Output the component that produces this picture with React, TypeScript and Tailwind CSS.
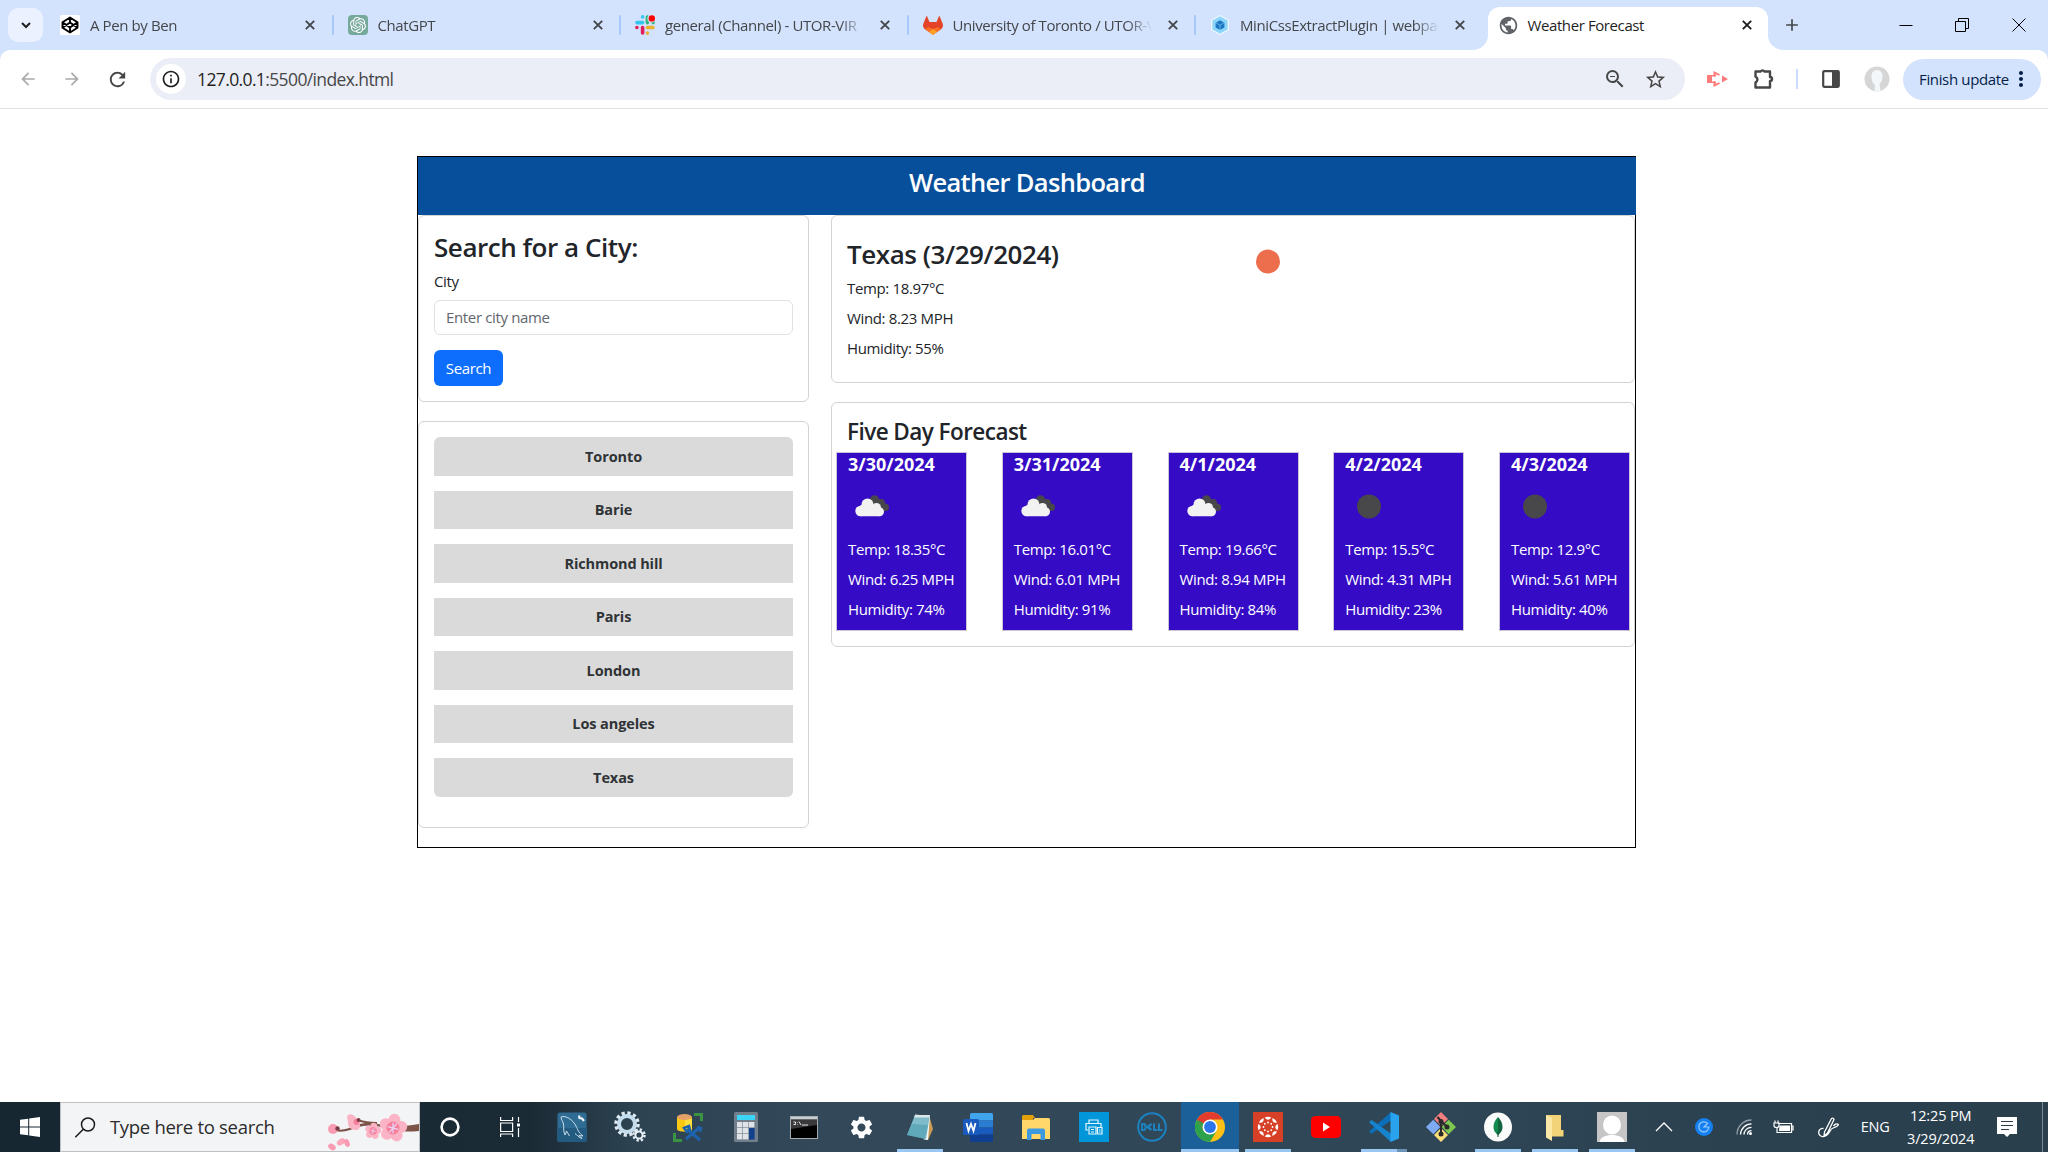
import React from "react";
import {
  MdArrowBack, MdArrowForward, MdRefresh, MdInfoOutline, MdZoomOut, MdStarOutline,
  MdPublic, MdAdd, MdMoreVert, MdSettings,
} from "react-icons/md";
import { SiOpenai } from "react-icons/si";

/* ---------- favicons ---------- */

const CodepenFavicon = () => (
  <svg width="20" height="20" viewBox="0 0 20 20">
    <rect width="20" height="20" rx="1.500" fill="#fff" />
    <path
      d="m10 2.500 7.500 4.700v5.600L10 17.500l-7.500-4.700V7.200zM10 2.500v5M10 12.500v5M2.500 7.200 10 12.500l7.500-5.300M2.500 12.800 10 7.500l7.500 5.300"
      fill="none" stroke="#000" strokeWidth="1.900" strokeLinejoin="round"
    />
  </svg>
);

const ChatGptFavicon = () => (
  <span className="flex h-5 w-5 items-center justify-center rounded-[4px] bg-[#75a99b] text-white">
    <SiOpenai size={16} />
  </span>
);

const SlackFavicon = () => (
  <svg width="20" height="20" viewBox="0 0 20 20">
    <g strokeWidth="3.6" strokeLinecap="round">
      <path d="M7.6 1.9h.01M2 7.6h5.6" stroke="#36c5f0" />
      <path d="M12.4 2v5.6M18.1 7.6h.01" stroke="#2eb67d" />
      <path d="M12.4 12.5H18M12.4 18.1h.01" stroke="#ecb22e" />
      <path d="M7.6 12.5V18M1.9 12.5h.01" stroke="#e01e5a" />
    </g>
    <circle cx="16.4" cy="3.6" r="4" fill="#d3e2fd" />
    <circle cx="16.8" cy="3.4" r="3.2" fill="#ff0000" />
  </svg>
);

const GitlabFavicon = () => (
  <svg width="20" height="20" viewBox="0 0 20 20">
    <path d="M3.7.6 6.5 7h7L16.3.6l3.400 8.200c.7 2.300 0 4.200-1.800 5.500L10 19.800l-7.900-5.500C.3 13-.4 11.100.3 8.800z" fill="#e24329" />
    <path d="M10 19.800 2.100 14.300l2.900-2.300L10 14z" fill="#fc6d26" />
    <path d="m10 19.800 7.900-5.500-2.900-2.300L10 14z" fill="#fc6d26" />
    <path d="m6 17 4-3 4 3-4 2.800z" fill="#fca326" />
  </svg>
);

const WebpackFavicon = () => (
  <svg width="20" height="20" viewBox="0 0 20 20">
    <path d="m10 0 9 5v10l-9 5-9-5V5z" fill="#f3f8fc" />
    <path d="m10 1.300 7.700 4.300v8.800L10 18.700l-7.700-4.300V5.600z" fill="#8ed6fb" />
    <path d="m10 5.200 4.400 2.500v4.800L10 15l-4.400-2.500V7.700z" fill="#1c78c0" />
    <path d="m5.600 7.700 4.400 2.500 4.400-2.500M10 10.200V15" stroke="#8ed6fb" strokeWidth=".6" fill="none" />
  </svg>
);

/* ---------- browser chrome ---------- */

const CloseIcon = () => (
  <svg width="10" height="10" viewBox="0 0 10 10" fill="none" stroke="currentColor" strokeWidth="1.900">
    <path d="m.8.8 8.400 8.400m0-8.400L.8 9.200" />
  </svg>
);

const tabs = [
  { title: "A Pen by Ben", icon: <CodepenFavicon /> },
  { title: "ChatGPT", icon: <ChatGptFavicon /> },
  { title: "general (Channel) - UTOR-VIR", icon: <SlackFavicon /> },
  { title: "University of Toronto / UTOR-V", icon: <GitlabFavicon /> },
  { title: "MiniCssExtractPlugin | webpac", icon: <WebpackFavicon /> },
];

function TabStrip() {
  return (
    <div className="flex h-[50px] bg-[#d3e2fd] text-[15px] tracking-[-0.400px] text-[#44474a]">
      <div className="flex w-[48px] shrink-0 items-center pl-[8px]">
        <div className="flex h-[34px] w-[35px] items-center justify-center rounded-[10px] bg-[#ebf1fe] text-[#1f1f1f]">
          <svg width="10" height="7" viewBox="0 0 10 7" fill="none" stroke="currentColor" strokeWidth="2">
            <path d="m1 1 4 4 4-4" />
          </svg>
        </div>
      </div>
      {tabs.map((tab, i) => (
        <div key={tab.title} className="flex w-[287.5px] shrink-0 items-center pl-[12px]">
          <div className="w-5 shrink-0">{tab.icon}</div>
          <div className="ml-[10px] w-[200px] whitespace-nowrap leading-[22px] [mask-image:linear-gradient(to_right,black_175px,transparent_199px)]">
            {tab.title}
          </div>
          <div className="ml-[11px] flex w-[18px] justify-center">
            <CloseIcon />
          </div>
          {i < 4 && <div className="mr-[2px] ml-auto h-5 w-[2px] rounded bg-[#a8c7fa]" />}
        </div>
      ))}
      <div className="ml-[-13px] flex h-full w-[310px] shrink-0 items-end">
        <div className="h-[15px] w-[15px] bg-white">
          <div className="h-full w-full rounded-br-[15px] bg-[#d3e2fd]" />
        </div>
        <div className="flex h-[43px] w-[280px] items-center rounded-t-[12px] bg-white pb-[7px] pl-[10px] text-[#1f1f1f]">
          <MdPublic size={21} className="text-[#5f6368]" />
          <span className="ml-[9px] leading-[22px]">Weather Forecast</span>
          <span className="mr-[16px] ml-auto"><CloseIcon /></span>
        </div>
        <div className="h-[15px] w-[15px] bg-white">
          <div className="h-full w-full rounded-bl-[15px] bg-[#d3e2fd]" />
        </div>
      </div>
      <div className="flex w-[18px] items-center">
        <MdAdd size={20} className="ml-[-1px] shrink-0" />
      </div>
      <div className="mr-[22px] ml-auto flex items-center gap-[43px] text-black">
        <svg width="14" height="14" viewBox="0 0 14 14"><path d="M.5 7.500h13" stroke="currentColor" /></svg>
        <svg width="14" height="14" viewBox="0 0 14 14" fill="none" stroke="currentColor" className="ml-[-1px]">
          <path d="M.5 3.500h10v10H.5zM3.500 3.500v-3h10v10h-3" />
        </svg>
        <svg width="14" height="14" viewBox="0 0 14 14" stroke="currentColor"><path d="m.5.5 13 13m0-13-13 13" /></svg>
      </div>
    </div>
  );
}

function Toolbar() {
  return (
    <div className="bg-[#d3e2fd]">
      <div className="flex h-[59px] items-center rounded-t-[10px] border-b border-[#dfe1e5] bg-white text-[#474747]">
        <div className="flex w-[150px] items-center pl-[18px]">
          <MdArrowBack size={20} className="text-[#ababab]" />
          <MdArrowForward size={20} className="ml-[24px] text-[#ababab]" />
          <MdRefresh size={23} className="ml-[24px]" />
        </div>
        <div className="flex h-[42px] w-[1535px] items-center rounded-full bg-[#ebeef7] pl-[6px]">
          <div className="flex h-[30px] w-[30px] items-center justify-center rounded-full bg-white text-[#1f1f1f]">
            <MdInfoOutline size={20} />
          </div>
          <span className="ml-[11px] text-[17.500px] leading-[26px] tracking-[-0.620px]">
            <span className="text-[#1f1f1f]">127.0.0.1</span>:5500/index.html
          </span>
          <MdZoomOut size={24} className="mr-[17px] ml-auto" />
          <MdStarOutline size={23} className="mr-[18px]" />
        </div>
        <svg width="22" height="18" viewBox="0 0 22 18" className="ml-[22px]">
          <path d="M0 5h5v8H0z" fill="#ff7b7b" />
          <path d="M6.500 6.500V1L13 4.200l-1 1.600-3.500-1.500v2.200zM6.500 11.500V17L13 13.800l-1-1.600-3.500 1.500v-2.200zM15 5.500 21 9l-6 3.500z" fill="#ff7b7b" />
          <path d="M5 5.800h4M5 12.200h4" stroke="#ff7b7b" strokeWidth="1.400" />
        </svg>
        <svg width="24" height="24" viewBox="0 0 24 24" className="ml-[23px]">
          <path
            d="M3.500 4.500h5.200a2 2 0 0 1 3.600 0h5.700v5.500a2 2 0 0 1 0 4v6.500H3.500v-5.200a3 3 0 0 0 0-5.600z"
            fill="none" stroke="#474747" strokeWidth="2.400" strokeLinejoin="round"
          />
        </svg>
        <div className="ml-[20px] h-5 w-[2px] bg-[#c9dcfb]" />
        <svg width="20" height="20" viewBox="0 0 20 20" className="ml-[23px]">
          <rect x="2.200" y="2.200" width="15.600" height="15.600" rx="1" fill="none" stroke="#474747" strokeWidth="2.200" />
          <path d="M11 2h7v16h-7z" fill="#474747" />
        </svg>
        <svg width="26" height="26" viewBox="0 0 26 26" className="ml-[23px]">
          <circle cx="13" cy="13" r="12.500" fill="#d6d6d6" />
          <path d="M13 4c4 0 5.500 3 5.500 6.500s-1.500 6-3 7.500l1 7h-6l.5-6C8.500 17.500 7.500 14 7.500 10.500S9 4 13 4z" fill="#f4f7f9" />
        </svg>
        <div className="ml-[13px] flex h-[41px] w-[138px] items-center rounded-full bg-[#d3e2fd] pl-[16px] text-[#041e49]">
          <span className="text-[15px] leading-[22px] tracking-[-0.350px] whitespace-nowrap">Finish update</span>
          <MdMoreVert size={24} className="mr-[8px] ml-auto" />
        </div>
      </div>
    </div>
  );
}

/* ---------- dashboard ---------- */

const cities = ["Toronto", "Barie", "Richmond hill", "Paris", "London", "Los angeles", "Texas"];

const forecast = [
  { date: "3/30/2024", clouds: true, temp: "18.35", wind: "6.25", humidity: 74 },
  { date: "3/31/2024", clouds: true, temp: "16.01", wind: "6.01", humidity: 91 },
  { date: "4/1/2024", clouds: true, temp: "19.66", wind: "8.94", humidity: 84 },
  { date: "4/2/2024", clouds: false, temp: "15.5", wind: "4.31", humidity: 23 },
  { date: "4/3/2024", clouds: false, temp: "12.9", wind: "5.61", humidity: 40 },
];

const BrokenClouds = () => (
  <svg width="47" height="47" viewBox="0 0 47 47">
    <g fill="#48484a">
      <circle cx="26.500" cy="17" r="4.700" />
      <circle cx="33" cy="20" r="4" />
      <circle cx="37.200" cy="24.200" r="3.700" />
      <path d="M25 17h10l3 11h-6z" />
    </g>
    <g fill="#f2f2f2">
      <circle cx="19.500" cy="21.500" r="6" />
      <circle cx="12.500" cy="28" r="5.200" />
      <circle cx="28.500" cy="24.500" r="4.500" />
      <circle cx="31.500" cy="28.800" r="4.500" />
      <path d="M12.500 22h15l4 11.300h-19z" />
    </g>
  </svg>
);

const Disc = ({ className }: { className: string }) => (
  <svg width="47" height="47" viewBox="0 0 47 47" className={className}>
    <circle cx="24" cy="23.500" r="12" fill="currentColor" />
  </svg>
);

function Dashboard() {
  return (
    <main className="mt-[47px] ml-[417px] h-[692px] w-[1219px] border border-black text-[15px] leading-[22.5px] tracking-[-0.350px] text-[#212529]">
      <header className="mr-[-1px] h-[58px] bg-[#084f9b] pt-[9px] text-center text-[25.500px] leading-[32px] font-semibold tracking-[-0.680px] text-white">
        Weather Dashboard
      </header>
      <div className="flex">
        <div className="w-[391px]">
          <section className="h-[187px] rounded-[6px] border border-[#d2d3d4] p-[15px]">
            <h3 className="mb-[6.500px] pt-px text-[26px] leading-[31.500px] font-[560] tracking-[-0.450px]">Search for a City:</h3>
            <label className="mb-[7.500px] block">City</label>
            <div className="mb-[15px] h-[35px] rounded-[6px] border border-[#dee2e6] px-[11px] py-[5px] text-[#5f666d]">
              Enter city name
            </div>
            <button className="flex h-[36px] w-[69px] items-center justify-center rounded-[6px] bg-[#0d6efd] text-white">
              Search
            </button>
          </section>
          <section className="mt-[19px] h-[407px] rounded-[6px] border border-[#d2d3d4] p-[15px]">
            <ul className="flex flex-col gap-[15px]">
              {cities.map((city) => (
                <li
                  key={city}
                  className="flex h-[38.500px] items-center justify-center bg-[#dadada] pt-px text-[14.500px] font-bold tracking-[-0.100px] text-[#2f3336] first:rounded-t-[6px] last:rounded-b-[6px]"
                >
                  {city}
                </li>
              ))}
            </ul>
          </section>
        </div>
        <div className="ml-[22px] w-[804px]">
          <section className="h-[167.500px] rounded-[6px] border border-[#d2d3d4] px-[15px] pt-[21.500px]">
            <div className="mb-[7.500px] flex h-[31.500px]">
              <h3 className="w-[396.500px] pt-px text-[26px] leading-[31.500px] font-[560] tracking-[-0.450px]">Texas (3/29/2024)</h3>
              <Disc className="text-[#ec6e4c]" />
            </div>
            <p className="mb-[7.500px]">Temp: 18.97°C</p>
            <p className="mb-[7.500px]">Wind: 8.23 MPH</p>
            <p>Humidity: 55%</p>
          </section>
          <section className="mt-[19.500px] h-[245px] rounded-[6px] border border-[#d2d3d4] px-[4px] pt-[15px]">
            <h4 className="mb-[7px] ml-[11px] text-[22.500px] leading-[27px] font-[560] tracking-[-0.550px]">Five Day Forecast</h4>
            <div className="flex justify-between">
              {forecast.map((day) => (
                <article key={day.date} className="h-[179px] w-[131px] border border-[#c9c4d6] bg-[#350bc5] pl-[11px] whitespace-nowrap text-white">
                  <h5 className="text-[18px] leading-[23px] font-bold tracking-normal">{day.date}</h5>
                  <div className="mt-[7px] mb-[8px]">
                    {day.clouds ? <BrokenClouds /> : <Disc className="text-[#48484a]" />}
                  </div>
                  <p className="mb-[7.500px]">Temp: {day.temp}°C</p>
                  <p className="mb-[7.500px]">Wind: {day.wind} MPH</p>
                  <p>Humidity: {day.humidity}%</p>
                </article>
              ))}
            </div>
          </section>
        </div>
      </div>
    </main>
  );
}

/* ---------- taskbar ---------- */

const petals = [0, 72, 144, 216, 288];

function Flower({ x, y, r }: { x: number; y: number; r: number }) {
  return (
    <g transform={`translate(${x} ${y}) scale(${r / 10})`}>
      {petals.map((a) => (
        <ellipse key={a} cx="0" cy="-6.200" rx="4.600" ry="4.800" fill="#fbb3c6" transform={`rotate(${a + 10})`} />
      ))}
      <circle r="5" fill="#f77f9b" />
      <path d="M0-4V4M-4-1 4 1M-3 3.500 3-3.500" stroke="#e6d3f4" strokeWidth="1" />
    </g>
  );
}

const Blossoms = () => (
  <svg width="92" height="48" viewBox="0 0 92 48">
    <path d="M8 26c8 2 14-1 22-4 10-4 20-1 32 1 8 1 18 0 30-2v7c-10 1-20 1-30-2-12-4-22-4-31-2-8 3-14 6-23 4z" fill="#7c5347" />
    <path d="M30 17c6 2 12 3 20 3" stroke="#7c5347" strokeWidth="2" fill="none" />
    <circle cx="6" cy="26" r="5" fill="#f99bb2" />
    <circle cx="10.500" cy="25.500" r="2.200" fill="#7a3b46" />
    <path d="M21 12c4-2 7 1 10 5s3 10-2 10-8-3-8-7-2-6 0-8z" fill="#fbb3c6" />
    <circle cx="29.500" cy="19" r="3" fill="#f77f9b" />
    <circle cx="31.500" cy="17" r="2" fill="#7a3b46" />
    <Flower x={46} y={28} r={7.5} />
    <Flower x={66} y={25} r={13} />
    <ellipse cx="5" cy="44" rx="4" ry="3" fill="#f99bb2" transform="rotate(30 5 44)" />
    <ellipse cx="14" cy="39" rx="4.500" ry="3" fill="#fba6bb" transform="rotate(-30 14 39)" />
    <ellipse cx="20" cy="40" rx="2.600" ry="4" fill="#f99bb2" transform="rotate(-20 20 40)" />
  </svg>
);

const MySql = () => (
  <svg width="30" height="30" viewBox="0 0 30 30">
    <rect x=".5" y=".5" width="29" height="29" rx="2.500" fill="#2e6c94" />
    <path d="M0 16h30v11.500a2.500 2.500 0 0 1-2.500 2.500h-25A2.500 2.500 0 0 1 0 27.500z" fill="#235a7f" />
    <path d="M4 5c5-2 12 3 15 9 2 4 2 6 7 10l-4-.5 3 3c-4-1-5-4-7-5M4 5c0 3 2 4 2.500 7S6 19 8 23c1-1 1-3 1.500-4l3 5" fill="none" stroke="#c9dde9" strokeWidth="1" />
    <path d="m22 3.500.5 2.500 2.500.5 2 2.500" stroke="#eef5fa" strokeWidth="2.200" fill="none" />
  </svg>
);

const Gears = () => (
  <svg width="32" height="32" viewBox="0 0 32 32">
    <circle cx="13" cy="13" r="11" fill="none" stroke="#dfeaf2" strokeWidth="3.500" strokeDasharray="3.200 2.560" />
    <circle cx="13" cy="13" r="8" fill="none" stroke="#c4dcec" strokeWidth="4" />
    <circle cx="25" cy="24" r="5.500" fill="none" stroke="#dfeaf2" strokeWidth="2.500" strokeDasharray="2.300 2.020" />
    <circle cx="25" cy="24" r="3.600" fill="none" stroke="#e8f0f6" strokeWidth="2" />
  </svg>
);

const Database = () => (
  <svg width="30" height="30" viewBox="0 0 30 30">
    <path d="M21 2.500h7.500V9M1.500 21v7.500H9" fill="none" stroke="#3a9342" strokeWidth="3" />
    <path d="M4 5h15v12c0 3.500-15 3.500-15 0z" fill="#fdc912" />
    <path d="M12 7h7v10c0 2-3 2.500-7 2.500z" fill="#ffdf3a" />
    <ellipse cx="11.500" cy="5" rx="7.500" ry="3" fill="#e3a069" />
    <path d="M13 27 26 16M14 17l13 11" stroke="#1e63ad" strokeWidth="3" />
    <path d="m11 16 5-2 1 4-3 2zM24 15l4 1-1 4" fill="none" stroke="#1e63ad" strokeWidth="2.500" />
  </svg>
);

const Calculator = () => (
  <svg width="24" height="30" viewBox="0 0 24 30">
    <rect width="24" height="30" rx="1.500" fill="#717e8b" />
    <rect x="3" y="3" width="18" height="5" fill="#3bd5f8" />
    {[10, 16, 22].map((y) => [3, 9, 15].map((x) => (
      <rect key={`${x}-${y}`} x={x} y={y} width="5.400" height="5.400" fill={x === 15 && y > 10 ? "#14418b" : "#dfe3e7"} />
    )))}
    <path d="M15 16h5.400v11.400H15z" fill="#14418b" />
  </svg>
);

const Terminal = () => (
  <svg width="28" height="23" viewBox="0 0 28 23">
    <rect x=".5" y=".5" width="27" height="22" fill="#000" stroke="#a5adb2" />
    <path d="M1 1h26v2.500H1z" fill="#c9ced1" />
    <path d="M1 13V4h26v5z" fill="#39393b" />
    <path d="M3.500 6h2v2.500h-2M7.500 6v.5M7.500 8v.5M9 5.500l2 3.500M12 9h6" stroke="#e5e5e5" fill="none" />
  </svg>
);

const Notepad = () => (
  <svg width="28" height="30" viewBox="0 0 28 30">
    <path d="M23 3l4 14-5 11-3-1z" fill="#c99b57" />
    <path d="M9 2.500 24 4l-2 24-4-.5z" fill="#f5f7f7" />
    <path d="M9 3h15l-4 24L1 23z" fill="#7fbccb" />
    <path d="M6 12 22 13l-3 14L1 23z" fill="#4a9caf" opacity=".6" />
    <path d="M9 3h15l-.5 2.500H8z" fill="#dce5e7" />
  </svg>
);

const Word = () => (
  <svg width="30" height="29" viewBox="0 0 30 29">
    <path d="M7 1.500A1.500 1.500 0 0 1 8.500 0H28.500A1.500 1.500 0 0 1 30 1.500V7.500H7z" fill="#41a5ee" />
    <path d="M7 7.500h23v7H7z" fill="#2b7cd3" />
    <path d="M7 14.500h23v7H7z" fill="#185abd" />
    <path d="M7 21.500h23v6a1.500 1.500 0 0 1-1.500 1.500h-20A1.500 1.500 0 0 1 7 27.500z" fill="#103f91" />
    <rect y="6" width="16" height="16" rx="1.500" fill="#185abd" />
    <path d="m3.500 10 2 8L8 11l2.500 7 2-8" fill="none" stroke="#fff" strokeWidth="1.800" />
  </svg>
);

const Explorer = () => (
  <svg width="28" height="25" viewBox="0 0 28 25">
    <path d="M0 1.500A1.500 1.500 0 0 1 1.500 0H11l2 3h-2v5H0z" fill="#e3a008" />
    <path d="M0 5h11l2-2h13.500A1.500 1.500 0 0 1 28 4.500V24H0z" fill="#ffd76a" />
    <path d="M5 25V15.500A2 2 0 0 1 7 13.500h14a2 2 0 0 1 2 2V25h-4.500v-6h-9v6z" fill="#3e9ae0" />
  </svg>
);

const Printer = () => (
  <svg width="30" height="30" viewBox="0 0 30 30">
    <path d="M0 0h30v30H0z" fill="#0096d9" />
    <g fill="none" stroke="#e5f5fc" strokeWidth="1.200">
      <path d="M10 11V8h9v3M9 18H7v-6.500h15V15M10 15h7v7h-7zM12 17.500h3M12 20h3" />
      <path d="M18.500 15.500H23V22h-4.500zM20 18h1.500M20 20h1.500" />
    </g>
  </svg>
);

const Dell = () => (
  <svg width="30" height="30" viewBox="0 0 30 30">
    <circle cx="15" cy="15" r="13.800" fill="none" stroke="#1b82bf" strokeWidth="2" />
    <path d="M5 12h2.500q2.500 3 0 6H5zM13.500 12.500 10 15l3.500 2.500M14.500 11.800l-3 3.200 3 3M17 11.500V18h3.500M22 11.500V18h3.500" fill="none" stroke="#1b82bf" strokeWidth="2" />
  </svg>
);

const Chrome = () => (
  <svg width="30" height="30" viewBox="0 0 30 30">
    <circle cx="15" cy="15" r="15" fill="#fbc116" />
    <path d="M15 15 21.500 18.750 15 30A15 15 0 0 1 2 7.500l6.500 11.250z" fill="#2da24c" />
    <path d="M2 7.500A15 15 0 0 1 28 7.500H15L8.500 18.750z" fill="#e33b2e" />
    <path d="M2 7.500 8.500 18.750 15 15z" fill="#2da24c" />
    <circle cx="15" cy="15" r="7.500" fill="#fff" />
    <circle cx="15" cy="15" r="5.900" fill="#2a75ea" />
  </svg>
);

const Canvas = () => (
  <svg width="30" height="30" viewBox="0 0 30 30">
    <path d="M0 0h30v30H0z" fill="#d64027" />
    {[0, 45, 90, 135, 180, 225, 270, 315].map((a) => (
      <g key={a} transform={`rotate(${a} 15 15)`} fill="#fff">
        <path d="M11.700 5.500Q15 4 18.300 5.500 15 10 11.700 5.500z" />
        <circle cx="15" cy="10.500" r=".9" />
      </g>
    ))}
  </svg>
);

const YouTube = () => (
  <svg width="30" height="22" viewBox="0 0 30 22">
    <rect width="30" height="22" rx="4.500" fill="#f00" />
    <path d="m12 6.500 7 4.500-7 4.500z" fill="#fff" />
  </svg>
);

const VsCode = () => (
  <svg width="30" height="30" viewBox="0 0 30 30">
    <path d="M22 0 0 19.500l2.500 2.300L22 8.500z" fill="#0a6fb8" />
    <path d="M2.500 8 0 10.300 22 30V21.500z" fill="#1583ce" />
    <path d="M21.500 0 30 3.500v23L21.500 30z" fill="#29a3ee" />
  </svg>
);

const Git = () => (
  <svg width="30" height="30" viewBox="0 0 30 30">
    <path d="m15 0 7 7-7 7-7-7z" fill="#f37f7f" />
    <path d="m7.300 7.700 7 7.300-7 7.300L0 15z" fill="#7fabf5" />
    <path d="m22.700 7.700 7.300 7.300-7.300 7.300-7-7.300z" fill="#7ec850" />
    <path d="m15 16 7 7-7 7-7-7z" fill="#fbdf79" />
    <path d="M11.500 5 15 9v13M15 9l6 6" stroke="#2b2b2b" strokeWidth="2" fill="none" />
    <circle cx="15" cy="9.500" r="2.500" fill="#2b2b2b" />
    <circle cx="21" cy="15" r="2.500" fill="#2b2b2b" />
    <circle cx="15" cy="22" r="2.500" fill="#2b2b2b" />
  </svg>
);

const Mongo = () => (
  <svg width="28" height="30" viewBox="0 0 28 30">
    <ellipse cx="14" cy="15" rx="14" ry="14.500" fill="#fbfbfb" />
    <path d="M14 5c3 3.500 4.500 6 4.500 10S16 21.500 14 23z" fill="#11643e" />
    <path d="M14 5c-3 3.500-4.500 6-4.500 10s2.500 6.500 4.500 8z" fill="#128a50" />
    <path d="M14 20v5" stroke="#0b4a2e" />
  </svg>
);

const Folder = () => (
  <svg width="18" height="27" viewBox="0 0 18 27">
    <path d="M0 1h15v15h2.500v6.500H6z" fill="#f2d377" />
    <path d="m0 1 6 3v23l-6-3.500z" fill="#fbe7a6" />
  </svg>
);

const Person = () => (
  <svg width="30" height="30" viewBox="0 0 30 30">
    <path d="M0 0h30v30H0z" fill="#c5c5c5" />
    <ellipse cx="15" cy="13" rx="9" ry="9.500" fill="#fff" />
    <path d="M2.500 30c1-5 6-7 12.500-7s11.500 2 12.500 7z" fill="#fff" />
  </svg>
);

type App = { name: string; icon: React.ReactNode; state?: "open" | "active" | "stacked" };

const apps: App[] = [
  { name: "mysql", icon: <MySql /> },
  { name: "services", icon: <Gears /> },
  { name: "database", icon: <Database /> },
  { name: "calculator", icon: <Calculator /> },
  { name: "terminal", icon: <Terminal /> },
  { name: "settings", icon: <MdSettings size={27} className="text-white" /> },
  { name: "notepad", icon: <Notepad />, state: "open" },
  { name: "word", icon: <Word /> },
  { name: "explorer", icon: <Explorer /> },
  { name: "printer", icon: <Printer /> },
  { name: "dell", icon: <Dell /> },
  { name: "chrome", icon: <Chrome />, state: "active" },
  { name: "canvas", icon: <Canvas />, state: "open" },
  { name: "youtube", icon: <YouTube /> },
  { name: "vscode", icon: <VsCode />, state: "stacked" },
  { name: "git", icon: <Git /> },
  { name: "mongo", icon: <Mongo />, state: "open" },
  { name: "folder", icon: <Folder />, state: "open" },
  { name: "person", icon: <Person />, state: "open" },
];

function Taskbar() {
  return (
    <footer className="flex h-[50px] bg-[linear-gradient(to_right,#172731_0%,#1b2b36_26%,#2d4352_31%,#33495a_40%,#2f4656_70%,#2b4150_85%,#2a3f4c_100%)] text-white">
      <div className="flex w-[60px] items-center justify-center">
        <svg width="20" height="20" viewBox="0 0 20 20" fill="#fff">
          <path d="M0 2.800 8.200 1.700v7.800H0zM9.200 1.500 20 0v9.500H9.200zM0 10.500h8.200v7.800L0 17.200zM9.200 10.500H20V20L9.200 18.500z" />
        </svg>
      </div>
      <div className="flex h-[50px] w-[360px] items-center border border-[#bfc1c3] bg-[#f3f4f6] pl-[14px] text-[#2b2b2b]">
        <svg width="21" height="21" viewBox="0 0 21 21" fill="none" stroke="#1b1b1b" strokeWidth="1.500">
          <circle cx="13" cy="7.500" r="6.500" />
          <path d="m8.300 12.200-8 8" />
        </svg>
        <span className="ml-[14px] text-[18.500px] leading-[28px] tracking-[-0.300px] whitespace-nowrap">Type here to search</span>
        <div className="ml-auto"><Blossoms /></div>
      </div>
      <div className="flex w-[60px] items-center justify-center">
        <svg width="20" height="20" viewBox="0 0 20 20"><circle cx="10" cy="10" r="8.400" fill="none" stroke="#fff" strokeWidth="2.600" /></svg>
      </div>
      <div className="flex w-[60px] items-center justify-center">
        <svg width="20" height="20" viewBox="0 0 20 20" fill="none" stroke="#fff" strokeWidth="1.200">
          <path d="M.6 0v3.500h12V0M.6 6h12v8.500H.6zM.6 20v-3h12v3M18.500 0v5M18.500 11v9" />
          <path d="M17 6.500h3v3h-3z" fill="#fff" stroke="none" />
        </svg>
      </div>
      <div className="ml-[3px] flex">
        {apps.map((app, i) => (
          <div
            key={app.name}
            className={`flex flex-col items-center ${i < 15 ? "w-[58px]" : "w-[57px]"} ${app.state === "active" ? "bg-[#1b6098]" : ""}`}
          >
            <div className="flex h-[47px] items-center justify-center pt-[3px]">{app.icon}</div>
            {app.state === "open" && <div className="h-[3px] w-[46px] bg-[#9ac6f2]" />}
            {app.state === "active" && <div className="h-[3px] w-full bg-[#9ac6f2]" />}
            {app.state === "stacked" && (
              <div className="flex h-[3px] w-[46px] bg-[#6b93b5]"><div className="w-[36px] bg-[#9ac6f2]" /></div>
            )}
          </div>
        ))}
      </div>
      <div className="ml-auto flex w-[407.500px] items-center">
        <svg width="18" height="10" viewBox="0 0 18 10" className="ml-[14px]" fill="none" stroke="#fff" strokeWidth="1.300"><path d="m1 9 8-8 8 8" /></svg>
        <svg width="18" height="18" viewBox="0 0 18 18" className="ml-[22px]">
          <circle cx="9" cy="9" r="9" fill="#1580f0" />
          <path d="M12.500 5.500a5 5 0 1 0 1.300 3.500H9l3.500-3.500z" fill="none" stroke="#9ccbfb" strokeWidth="1.200" />
        </svg>
        <svg width="16" height="16" viewBox="0 0 16 16" className="ml-[23px]" fill="none" stroke="#fff" strokeWidth="1.300">
          <path d="M1 15.500A14.500 14.500 0 0 1 15.500 1" opacity=".5" />
          <path d="M4.500 15.500A11 11 0 0 1 15.500 4.800M8 15.500a7.500 7.500 0 0 1 7.500-7.200M11.500 15.500a4 4 0 0 1 4-3.800" />
          <circle cx="14.500" cy="14.500" r="1.500" fill="#fff" stroke="none" />
        </svg>
        <svg width="21" height="15" viewBox="0 0 21 15" className="ml-[21px]" fill="none" stroke="#fff" strokeWidth="1.200">
          <path d="M5 3.500h13.500v9H4V8M18.500 6h1.500v4h-1.500M1 3h5v2.500q0 2-2.500 2T1 5.500zM2 3V.5M5 3V.5" />
          <path d="M6.500 5.500h10.500v5.500H6z" fill="#fff" stroke="none" />
        </svg>
        <svg width="21" height="21" viewBox="0 0 21 21" className="ml-[24px]" fill="none" stroke="#fff" strokeWidth="1.300">
          <path d="M6.500 15 13.500 1.500q2-1 2.500 1L9.500 16l-3.500 3zM5.500 11.500C2 11 0 14 1 17s5 3.500 8 1 3-6 6-7c2-1 4-1 5.500-3.500-2-1.500-4 0-5 1.500" />
        </svg>
        <span className="ml-[22px] w-[31px] text-[14.500px] leading-[20px] tracking-[-0.200px] whitespace-nowrap">ENG</span>
        <div className="ml-[11px] w-[76px] text-center text-[14.500px] leading-[23px] tracking-[-0.150px] whitespace-nowrap">
          <div>12:25 PM</div>
          <div>3/29/2024</div>
        </div>
        <svg width="20" height="20" viewBox="0 0 20 20" className="ml-[18px]">
          <path d="M0 0h20v17h-7l-3 3-3-3H0z" fill="#fff" />
          <path d="M4 4.500h12M4 8.500h12M4 12.500h8" stroke="#2a3f4c" strokeWidth="1.200" />
        </svg>
        <div className="mr-[5px] ml-auto h-[50px] w-px bg-[#7d8990]" />
      </div>
    </footer>
  );
}

export default function App() {
  return (
    <div className="flex h-[1152px] w-[2048px] flex-col overflow-hidden bg-white font-['Open_Sans','Noto_Sans',sans-serif] font-stretch-[93%]">
      <TabStrip />
      <Toolbar />
      <div className="flex-1"><Dashboard /></div>
      <Taskbar />
    </div>
  );
}
